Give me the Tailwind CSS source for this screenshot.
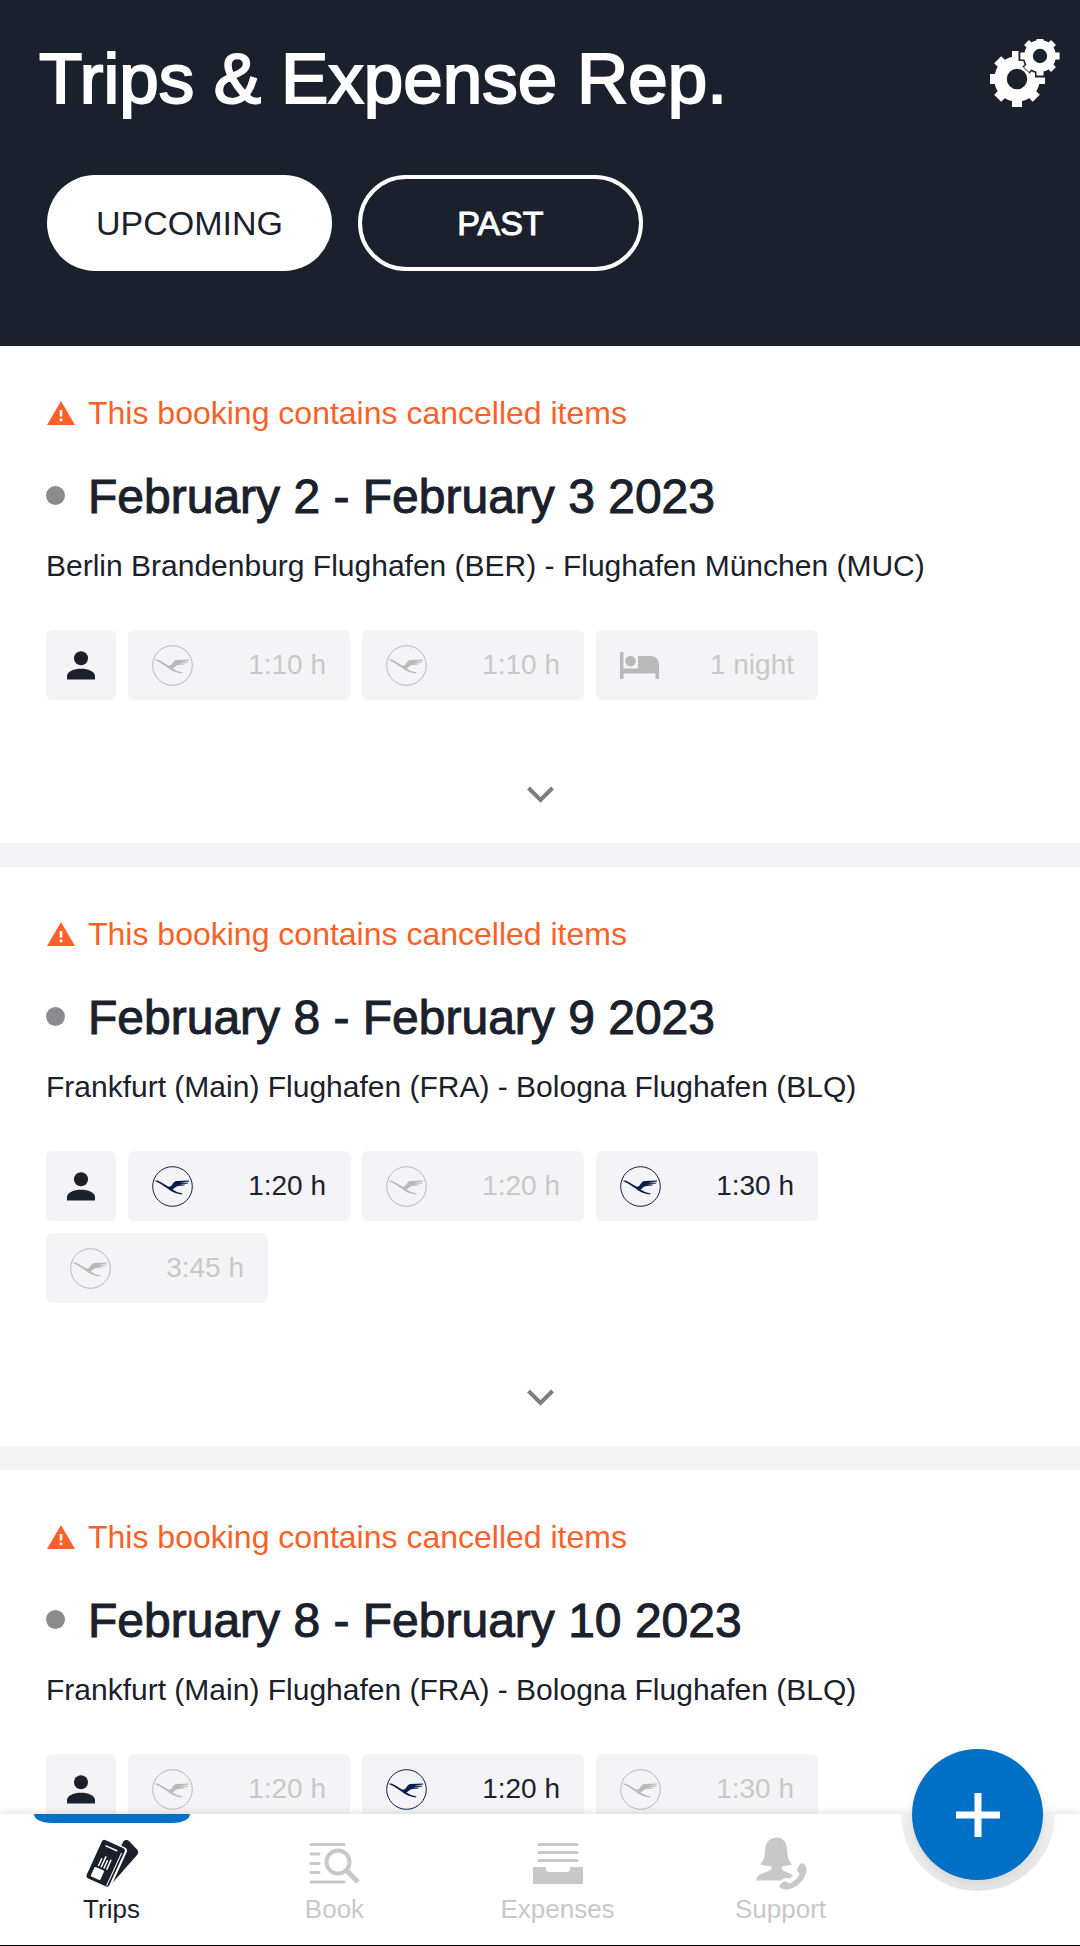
<!DOCTYPE html>
<html lang="en">
<head>
    <meta charset="UTF-8">
    <meta name="viewport" content="width=device-width, initial-scale=1.0">
    <title>Trips &amp; Expense Rep.</title>
    <script src="https://cdn.jsdelivr.net/npm/@tailwindcss/browser@4"></script>
</head>
<body class="flex h-screen flex-col overflow-hidden bg-white font-['Liberation_Sans',Arial,sans-serif] text-[#1a212c]">
    <!-- Icons -->
    <svg class="hidden" aria-hidden="true">
        <symbol id="warning" viewBox="0 0 28 24">
            <path fill="#fa6129" d="M14 0 28 24H0z"/>
            <path fill="#fff" d="M12.7 9h2.6v6.500h-2.600zM12.700 17.500h2.600v2.700h-2.600z"/>
        </symbol>
        <symbol id="person" viewBox="0 0 28 29">
            <circle cx="14" cy="7.200" r="7" fill="currentColor"/>
            <path fill="currentColor" d="M0 28.500V25c0-4.600 7-7.300 14-7.300S28 20.400 28 25v3.500z"/>
        </symbol>
        <symbol id="crane" viewBox="0 0 41 41">
            <circle cx="20.500" cy="20.500" r="19.800" fill="none" stroke="currentColor"/>
            <path fill="currentColor" d="M2.500 14.700 5.500 14.500 9.500 16.500 16.500 20.700 18.700 20.200C20.500 19 21.500 15.200 24.500 15L37 14.600 37.200 15.400 28.500 16.400 36.500 16.800 35.500 17.700 27 18 33.500 18.800 32 19.600 26.500 19.900C23.500 20.300 22.500 22 20.500 23.600L25 26 30.500 27.600 30 28.500C24 28 19.500 25.900 15.500 22.600L8 17.500z"/>
        </symbol>
        <symbol id="bed" viewBox="0 0 39 27">
            <path fill="currentColor" d="M0 0h3.500v16.500H18V4h13a8 8 0 0 1 8 8v15h-3.500v-5.500h-32V27H0z"/>
            <circle cx="10.500" cy="9" r="5.300" fill="currentColor"/>
        </symbol>
        <symbol id="chevron" viewBox="0 0 27 17">
            <path fill="none" stroke="currentColor" stroke-width="4" d="M1.500 2 13.500 14 25.500 2"/>
        </symbol>
        <symbol id="gear" viewBox="-30 -30 60 60">
            <g fill="none" stroke="currentColor">
                <circle r="16.500" stroke-width="12.500"/>
                <path stroke-width="10" d="M0-20V-28M0 20V28M-20 0H-28M20 0H28M14.500-14.500 19.300-19.300M-14.500 14.500-19.300 19.300M14.500 14.500 19.300 19.300M-14.500-14.500-19.300-19.300"/>
            </g>
        </symbol>
    </svg>

    <!-- Header -->
    <header class="shrink-0 bg-[#1a212c] pt-[39px] pr-5 pb-[75px] pl-[39px] text-white">
        <div class="flex items-start justify-between">
            <h1 class="text-[71px] leading-[80px] [-webkit-text-stroke:2px]">Trips &amp; Expense Rep.</h1>
            <button type="button" aria-label="Settings">
                <svg class="size-[70px]" viewBox="0 3 70 70">
                    <g class="text-white">
                        <use href="#gear" x="-3" y="13" width="60" height="60"/>
                    </g>
                    <g class="text-[#1a212c]">
                        <circle cx="50" cy="20" r="17.500" fill="currentColor"/>
                        <path stroke="currentColor" stroke-width="10" d="M50 0V41.500M28.500 20H70M36 6 64 34M64 6 36 34"/>
                    </g>
                    <g class="text-white">
                        <use href="#gear" x="29" y="-1" width="42" height="42"/>
                    </g>
                </svg>
            </button>
        </div>
        <div class="mt-14 flex gap-[26px] pl-2">
            <button type="button" class="h-24 w-[285px] rounded-full bg-white text-[34px] text-[#1a212c]">UPCOMING</button>
            <button type="button" class="h-24 w-[285px] rounded-full border-4 border-white text-[34px] [-webkit-text-stroke:1px]">PAST</button>
        </div>
    </header>

    <!-- Trip list -->
    <main class="flex min-h-0 flex-1 flex-col gap-6 overflow-hidden bg-[#f4f4f6]">
        <article class="shrink-0 bg-white px-[46px] pt-[47px] pb-[25px]">
            <p class="flex items-center pl-px text-[32px] leading-10 text-[#fa6129]">
                <svg class="mr-[13px] h-6 w-7"><use href="#warning"/></svg>
                This booking contains cancelled items
            </p>
            <h2 class="mt-9 flex items-center text-[48px] leading-14 [-webkit-text-stroke:1px]">
                <span class="mr-[23px] mb-1 size-[19px] rounded-full bg-[#8b8b8f]"></span>
                February 2 - February 3 2023
            </h2>
            <p class="mt-[21px] text-[30px] leading-10">Berlin Brandenburg Flughafen (BER) - Flughafen München (MUC)</p>
            <ul class="mt-11 flex max-w-[780px] flex-wrap gap-3 text-[28px]">
                <li class="flex size-[70px] items-center justify-center rounded-md bg-[#f4f4f6]">
                    <svg class="h-[29px] w-7"><use href="#person"/></svg>
                </li>
                <li class="flex h-[70px] w-[222px] items-center justify-between rounded-md bg-[#f4f4f6] px-6 text-[#c8c8c8]">
                    <svg class="size-[41px] text-[#b9b9b9]"><use href="#crane"/></svg>
                    1:10 h
                </li>
                <li class="flex h-[70px] w-[222px] items-center justify-between rounded-md bg-[#f4f4f6] px-6 text-[#c8c8c8]">
                    <svg class="size-[41px] text-[#b9b9b9]"><use href="#crane"/></svg>
                    1:10 h
                </li>
                <li class="flex h-[70px] w-[222px] items-center justify-between rounded-md bg-[#f4f4f6] px-6 text-[#c8c8c8]">
                    <svg class="h-[27px] w-[39px] text-[#b9b9b9]"><use href="#bed"/></svg>
                    1 night
                </li>
            </ul>
            <button type="button" aria-label="Show trip details" class="mt-[70px] flex h-12 w-full items-center justify-center text-[#7c7d80]">
                <svg class="h-[17px] w-[27px]"><use href="#chevron"/></svg>
            </button>
        </article>

        <article class="shrink-0 bg-white px-[46px] pt-[47px] pb-[25px]">
            <p class="flex items-center pl-px text-[32px] leading-10 text-[#fa6129]">
                <svg class="mr-[13px] h-6 w-7"><use href="#warning"/></svg>
                This booking contains cancelled items
            </p>
            <h2 class="mt-9 flex items-center text-[48px] leading-14 [-webkit-text-stroke:1px]">
                <span class="mr-[23px] mb-1 size-[19px] rounded-full bg-[#8b8b8f]"></span>
                February 8 - February 9 2023
            </h2>
            <p class="mt-[21px] text-[30px] leading-10">Frankfurt (Main) Flughafen (FRA) - Bologna Flughafen (BLQ)</p>
            <ul class="mt-11 flex max-w-[780px] flex-wrap gap-3 text-[28px]">
                <li class="flex size-[70px] items-center justify-center rounded-md bg-[#f4f4f6]">
                    <svg class="h-[29px] w-7"><use href="#person"/></svg>
                </li>
                <li class="flex h-[70px] w-[222px] items-center justify-between rounded-md bg-[#f4f4f6] px-6">
                    <svg class="size-[41px] text-[#0a1d4d]"><use href="#crane"/></svg>
                    1:20 h
                </li>
                <li class="flex h-[70px] w-[222px] items-center justify-between rounded-md bg-[#f4f4f6] px-6 text-[#c8c8c8]">
                    <svg class="size-[41px] text-[#b9b9b9]"><use href="#crane"/></svg>
                    1:20 h
                </li>
                <li class="flex h-[70px] w-[222px] items-center justify-between rounded-md bg-[#f4f4f6] px-6">
                    <svg class="size-[41px] text-[#0a1d4d]"><use href="#crane"/></svg>
                    1:30 h
                </li>
                <li class="flex h-[70px] w-[222px] items-center justify-between rounded-md bg-[#f4f4f6] px-6 text-[#c8c8c8]">
                    <svg class="size-[41px] text-[#b9b9b9]"><use href="#crane"/></svg>
                    3:45 h
                </li>
            </ul>
            <button type="button" aria-label="Show trip details" class="mt-[70px] flex h-12 w-full items-center justify-center text-[#7c7d80]">
                <svg class="h-[17px] w-[27px]"><use href="#chevron"/></svg>
            </button>
        </article>

        <article class="shrink-0 bg-white px-[46px] pt-[47px] pb-[25px]">
            <p class="flex items-center pl-px text-[32px] leading-10 text-[#fa6129]">
                <svg class="mr-[13px] h-6 w-7"><use href="#warning"/></svg>
                This booking contains cancelled items
            </p>
            <h2 class="mt-9 flex items-center text-[48px] leading-14 [-webkit-text-stroke:1px]">
                <span class="mr-[23px] mb-1 size-[19px] rounded-full bg-[#8b8b8f]"></span>
                February 8 - February 10 2023
            </h2>
            <p class="mt-[21px] text-[30px] leading-10">Frankfurt (Main) Flughafen (FRA) - Bologna Flughafen (BLQ)</p>
            <ul class="mt-11 flex max-w-[780px] flex-wrap gap-3 text-[28px]">
                <li class="flex size-[70px] items-center justify-center rounded-md bg-[#f4f4f6]">
                    <svg class="h-[29px] w-7"><use href="#person"/></svg>
                </li>
                <li class="flex h-[70px] w-[222px] items-center justify-between rounded-md bg-[#f4f4f6] px-6 text-[#c8c8c8]">
                    <svg class="size-[41px] text-[#b9b9b9]"><use href="#crane"/></svg>
                    1:20 h
                </li>
                <li class="flex h-[70px] w-[222px] items-center justify-between rounded-md bg-[#f4f4f6] px-6">
                    <svg class="size-[41px] text-[#0a1d4d]"><use href="#crane"/></svg>
                    1:20 h
                </li>
                <li class="flex h-[70px] w-[222px] items-center justify-between rounded-md bg-[#f4f4f6] px-6 text-[#c8c8c8]">
                    <svg class="size-[41px] text-[#b9b9b9]"><use href="#crane"/></svg>
                    1:30 h
                </li>
            </ul>
        </article>
    </main>

    <!-- Bottom navigation -->
    <nav class="relative grid shrink-0 grid-cols-4 border-b border-black bg-white pr-[188px] text-[26px] leading-8 text-[#c8c8c8] shadow-[0_-2px_8px_rgba(0,0,0,0.1)]">
        <a href="#trips" class="flex flex-col items-center pb-5 text-[#1a212c]">
            <span class="h-[9px] w-[156px] rounded-b-[16px_9px] bg-[#006fc6]"></span>
            <svg class="mt-3 h-[58px] w-[54px]" viewBox="0 0 54 58">
                <path fill="currentColor" d="M38 7C40 4.500 42.500 4.500 44.500 6.500L52 14.500C53.500 16.500 53.500 18 52 20L26.500 49 33 18z"/>
                <g transform="translate(18 4) rotate(24.500)">
                    <rect x="-1.500" y="-1.500" width="28.500" height="44.500" rx="4" fill="#fff"/>
                    <rect width="25" height="42" rx="3" fill="currentColor"/>
                    <path stroke="#fff" d="M22.700 5V41"/>
                    <path stroke="#fff" stroke-width="1.500" d="M5 5H18M7 18V26.500M10 14.500V26.500M13 17.500V26.500M16 15.500V26.500"/>
                    <rect x="4" y="28.500" width="10.500" height="10.500" rx="1" fill="#fff"/>
                </g>
            </svg>
            Trips
        </a>
        <a href="#book" class="flex flex-col items-center pt-[21px] pb-5">
            <svg class="h-[58px] w-[52px]" viewBox="0 0 52 58" fill="none" stroke="currentColor">
                <path stroke-width="3" stroke-linecap="round" d="M2 9.500H35M2 19H10M2 28.500H10M2 37.500H10M2 47H35"/>
                <circle cx="29" cy="27" r="11.500" stroke-width="4"/>
                <path stroke-width="5" d="M37.500 35.500 49 47"/>
            </svg>
            Book
        </a>
        <a href="#expenses" class="flex flex-col items-center pt-[21px] pb-5">
            <svg class="h-[58px] w-[52px]" viewBox="0 0 52 58">
                <path fill="none" stroke="currentColor" stroke-width="3" stroke-linecap="round" d="M7 9.500H45M7 17.500H45M7 25.500H45"/>
                <path fill="currentColor" d="M1 32H14V34a3 3 0 0 0 3 3H35a3 3 0 0 0 3-3V32H51V49H1z"/>
            </svg>
            Expenses
        </a>
        <a href="#support" class="flex flex-col items-center pt-[21px] pb-5">
            <svg class="h-[58px] w-[52px]" viewBox="0 0 52 58">
                <path fill="currentColor" d="M22 2.500C14.500 2.500 10.500 8 10.200 14 10 21 9 26 5 29.500 9 30.500 12.500 31 16.500 31.500 17 35 15 35.500 9.500 37.500 4 39.500 1.500 41 1 45.500H26C28 43.500 31 42.500 34.500 43.500L38 40.500C35.500 38 28 36.500 27 34.500 26.500 33.500 26.500 32 27 31.500 30.500 31 33 30.500 37 29.500 33.500 26 32.500 21 32 14 31.500 7 28 2.500 22 2.500z"/>
                <path fill="currentColor" d="M45 29C47 27 51 29.500 51.500 33.500 52 43.500 41 55 30 54.500 26.500 54 23.500 51.500 24.500 50L29 46.500C31 45.500 33 48.500 34.500 48.500 38 47.500 43.500 42.500 44.500 39 44.500 37.500 41.500 36 42.200 34.300z"/>
            </svg>
            Support
        </a>

        <!-- Notch and add button lie over the bar -->
        <div class="absolute top-0 right-[25px] h-[77px] w-[154px] rounded-b-full bg-linear-to-b from-[#f0f0f0] to-[#e4e4e4]"></div>
        <button type="button" aria-label="Add" class="absolute -top-[65px] right-[37px] flex size-[131px] items-center justify-center rounded-full bg-[#006fc6] shadow-[0_2px_8px_rgba(0,0,0,0.08)]">
            <svg class="size-11" viewBox="0 0 44 44" stroke="#fff" stroke-width="7"><path d="M22 0V44M0 22H44"/></svg>
        </button>
    </nav>
</body>
</html>
